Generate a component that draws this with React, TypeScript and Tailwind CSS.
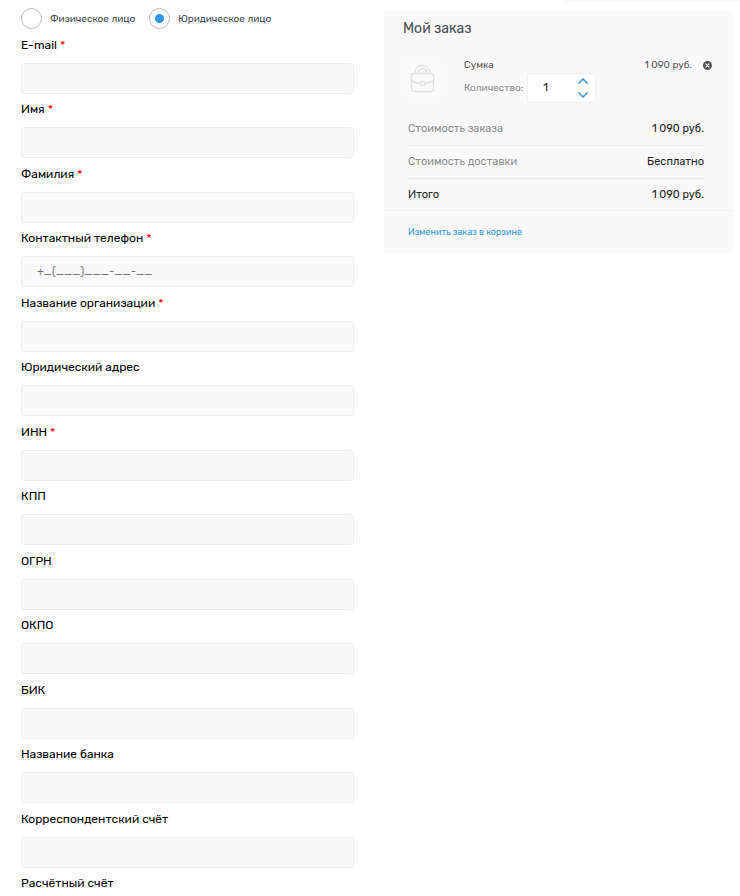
import { useState } from "react";

type Field = { id: string; label: string; required?: boolean; placeholder?: string; type?: string };

const fields: Field[] = [
  { id: "email", label: "E-mail", required: true, type: "email" },
  { id: "name", label: "Имя", required: true },
  { id: "surname", label: "Фамилия", required: true },
  { id: "phone", label: "Контактный телефон", required: true, type: "tel", placeholder: "+_(___)___-__-__" },
  { id: "company", label: "Название организации", required: true },
  { id: "address", label: "Юридический адрес" },
  { id: "inn", label: "ИНН", required: true },
  { id: "kpp", label: "КПП" },
  { id: "ogrn", label: "ОГРН" },
  { id: "okpo", label: "ОКПО" },
  { id: "bik", label: "БИК" },
  { id: "bank", label: "Название банка" },
  { id: "corr", label: "Корреспондентский счёт" },
  { id: "account", label: "Расчётный счёт" },
];

const totals = [
  { label: "Стоимость заказа", value: "1 090 руб.", tone: "text-[#8c8c8c]" },
  { label: "Стоимость доставки", value: "Бесплатно", tone: "text-[#8c8c8c]" },
  { label: "Итого", value: "1 090 руб.", tone: "text-[#222]" },
];

function PersonOption({ label, checked, onSelect }: { label: string; checked: boolean; onSelect: () => void }) {
  return (
    <label className="flex items-center gap-2 text-[10px] leading-4 text-[#3c4650]">
      <input
        type="radio"
        name="person"
        checked={checked}
        onChange={onSelect}
        className="size-[21px] shrink-0 appearance-none rounded-full border border-[#b9b9b9] bg-white checked:bg-[radial-gradient(circle,#2f96ea_4px,white_5px)]"
      />
      {label}
    </label>
  );
}

function FormField({ field }: { field: Field }) {
  return (
    <div className="flex flex-col pb-[5px] even:pb-[6px]">
      <label htmlFor={field.id} className="mb-2 text-[12px] leading-5 text-black">
        {field.label}
        {field.required && <span className="ml-[3px] text-[#f00]">*</span>}
      </label>
      <input
        id={field.id}
        type={field.type ?? "text"}
        placeholder={field.placeholder}
        className="h-[31px] w-full rounded-[3px] border border-[#ededf0] bg-[#f9f9f9] px-[15px] text-[11px] placeholder:text-[#777]"
      />
    </div>
  );
}

function BagImage() {
  return (
    <svg viewBox="0 0 37 37" className="mt-[3px] size-[37px] shrink-0 bg-[#fafafa]" fill="none" stroke="#e2e2e2" strokeWidth="1.3" aria-hidden="true">
      <rect x="7.500" y="13.500" width="22" height="18" rx="2.500" />
      <path d="M11 13.500c0-5 3-8 7.500-8s7.500 3 7.500 8M14 13.500c0-3 1.500-5 4.500-5s4.500 2 4.500 5" />
      <path d="M7.500 20c2 2.200 4.500 3 8 3.400M29.500 20c-2 2.200-4.500 3-8 3.400" />
      <rect x="16" y="21.500" width="5" height="4" rx="2" />
    </svg>
  );
}

function Chevron({ down }: { down?: boolean }) {
  return (
    <svg viewBox="0 0 12 8" className="h-2 w-3" fill="none" stroke="#2f96ea" strokeWidth="1.500" aria-hidden="true">
      <path d={down ? "M1.500 1.500 6 6l4.500-4.500" : "M1.500 6.500 6 2l4.500 4.500"} />
    </svg>
  );
}

function OrderCard() {
  const [count, setCount] = useState(1);
  return (
    <aside className="mt-[9px] rounded-[3px] bg-[#f9f9f9] pt-2">
      <h2 className="pl-[19px] text-[14px] leading-5 text-[#484c55]">Мой заказ</h2>
      <div className="mt-[18px] flex items-start pr-[21px] pl-5">
        <BagImage />
        <div className="ml-[23px] min-w-0 flex-1 text-[10px]">
          <div className="flex h-4 items-center text-[#555]">
            <span className="flex-1">Сумка</span>
            <span>1 090 руб.</span>
            <button type="button" aria-label="Удалить" className="ml-[11px]">
              <svg viewBox="0 0 9 9" className="size-[9px]" aria-hidden="true">
                <circle cx="4.500" cy="4.500" r="4.500" fill="#555" />
                <path d="m2.700 2.700 3.600 3.600m0-3.600L2.700 6.300" stroke="#fff" strokeWidth="1.200" />
              </svg>
            </button>
          </div>
          <div className="flex items-center">
            <label htmlFor="count" className="w-[63px] whitespace-nowrap text-[#8c8c8c]">Количество:</label>
            <div className="flex h-[30px] w-[69px] items-center rounded-[3px] border border-[#eee] bg-white">
              <input
                id="count"
                value={count}
                onChange={(e) => setCount(Number(e.target.value) || 1)}
                className="w-[35px] text-center text-[11px] text-[#222]"
              />
              <div className="flex flex-1 flex-col items-center gap-[6px] pr-[2px] pl-[9px]">
                <button type="button" aria-label="Больше" onClick={() => setCount(count + 1)}><Chevron /></button>
                <button type="button" aria-label="Меньше" onClick={() => setCount(Math.max(1, count - 1))}><Chevron down /></button>
              </div>
            </div>
          </div>
        </div>
      </div>
      <dl className="mt-[9px] pr-[29px] pl-6 text-[11px] leading-4">
        {totals.map((t) => (
          <div key={t.label} className="flex justify-between border-t border-[#ebebf0] py-2 first:border-transparent last:pb-[7px]">
            <dt className={t.tone}>{t.label}</dt>
            <dd className="text-[#222]">{t.value}</dd>
          </div>
        ))}
      </dl>
      <div className="border-t border-[#efeff1] py-[13px] pl-6 text-[9px] leading-4">
        <a href="#cart" className="text-[#2f96ea]">Изменить заказ в корзине</a>
      </div>
    </aside>
  );
}

export default function App() {
  const [person, setPerson] = useState("legal");
  return (
    <div className="bg-white font-[Rubik,Roboto,sans-serif]">
      <div className="ml-auto h-[2px] w-[175px] bg-[#f8f8f8]" />
      <main className="grid grid-cols-[333fr_349fr] items-start gap-[30px] pr-[7px] pl-[21px]">
        <form className="pt-[6px]">
          <div className="mb-[6px] flex h-[21px] items-center gap-[14px]">
            <PersonOption label="Физическое лицо" checked={person === "private"} onSelect={() => setPerson("private")} />
            <PersonOption label="Юридическое лицо" checked={person === "legal"} onSelect={() => setPerson("legal")} />
          </div>
          <div>
            {fields.map((f) => (
              <FormField key={f.id} field={f} />
            ))}
          </div>
        </form>
        <OrderCard />
      </main>
    </div>
  );
}
